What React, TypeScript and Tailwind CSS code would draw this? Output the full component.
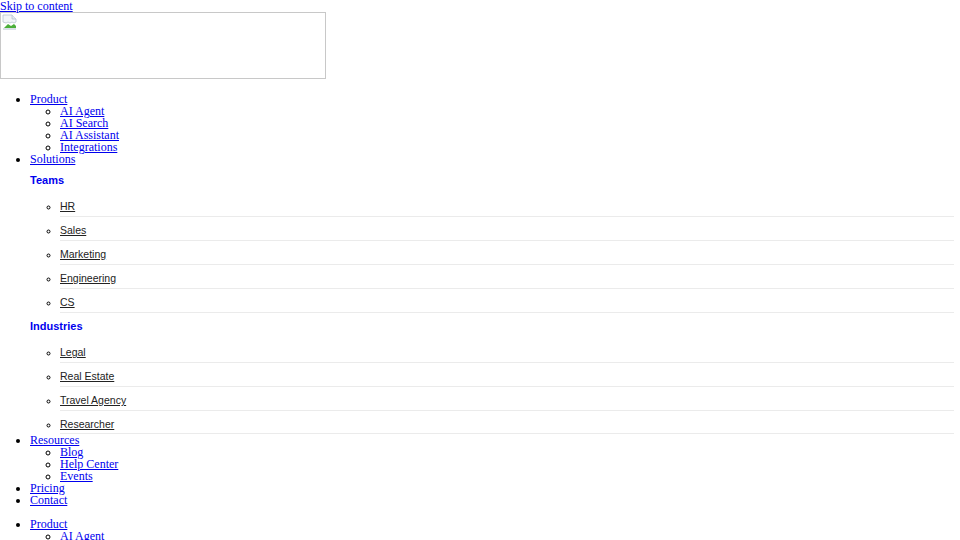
const product = ["AI Agent", "AI Search", "AI Assistant", "Integrations"];
const teams = ["HR", "Sales", "Marketing", "Engineering", "CS"];
const industries = ["Legal", "Real Estate", "Travel Agency", "Researcher"];
const resources = ["Blog", "Help Center", "Events"];

function SubList({ items }: { items: string[] }) {
  return (
    <ul className="list-[circle] pl-[30px]">
      {items.map((item) => (
        <li key={item}>
          <a href="#" className="text-[#0000ee] underline">
            {item}
          </a>
        </li>
      ))}
    </ul>
  );
}

function Group({
  title,
  items,
  top,
  tight,
}: {
  title: string;
  items: string[];
  top: string;
  tight?: boolean;
}) {
  return (
    <div className={`${top} font-['Liberation_Sans',Arial,sans-serif]`}>
      <div className="mb-[7px] text-[11px] leading-[12px] font-bold text-[#0000ee]">{title}</div>
      <ul className="list-[circle] pl-[30px] mr-[6px]">
        {items.map((item, i) => (
          <li
            key={item}
            className={
              tight && i === items.length - 1
                ? "pt-[7px] pb-[3px] border-b border-[#ebebeb] text-[10.5px] leading-[12px]"
                : "pt-[7px] pb-[4px] border-b border-[#ebebeb] text-[10.5px] leading-[12px]"
            }
          >
            <a href="#" className="text-[#222] underline">
              {item}
            </a>
          </li>
        ))}
      </ul>
    </div>
  );
}

function Menu() {
  return (
    <ul className="list-disc pl-[30px] my-[12px]">
      <li>
        <a href="#" className="text-[#0000ee] underline">
          Product
        </a>
        <SubList items={product} />
      </li>
      <li>
        <a href="#" className="text-[#0000ee] underline">
          Solutions
        </a>
        <Group title="Teams" items={teams} top="mt-[9px]" />
        <Group title="Industries" items={industries} top="mt-[7px]" tight />
      </li>
      <li>
        <a href="#" className="text-[#0000ee] underline">
          Resources
        </a>
        <SubList items={resources} />
      </li>
      <li>
        <a href="#" className="text-[#0000ee] underline">
          Pricing
        </a>
      </li>
      <li>
        <a href="#" className="text-[#0000ee] underline">
          Contact
        </a>
      </li>
    </ul>
  );
}

function BrokenImage() {
  return (
    <div className="pb-[2px]">
      <div className="w-[326px] h-[67px] border border-[#c8c8c8] bg-white">
        <svg width="16" height="16" viewBox="0 0 16 16" className="ml-[1px] mt-[1px]">
          <path d="M1 1h9l4 4v3l-2 1-2-1-2 1-2-1-2 1-3-1z" fill="#f2f5f8" stroke="#b8c4cf" strokeWidth="0.8" />
          <path d="M10 1v4h4" fill="#e3e8ee" stroke="#b8c4cf" strokeWidth="0.8" />
          <path d="M2 14l4-4 3 2 3-2 2 2v2z" fill="#4caf3a" />
          <path d="M1 15h13" stroke="#9fb0bf" strokeWidth="0.8" />
        </svg>
      </div>
    </div>
  );
}

export default function App() {
  return (
    <div className="bg-white min-h-screen font-['Liberation_Serif','Times_New_Roman',serif] text-[12px] leading-[12px] text-black">
      <a href="#" className="text-[#0000ee] underline">
        Skip to content
      </a>
      <BrokenImage />
      <Menu />
      <Menu />
    </div>
  );
}
